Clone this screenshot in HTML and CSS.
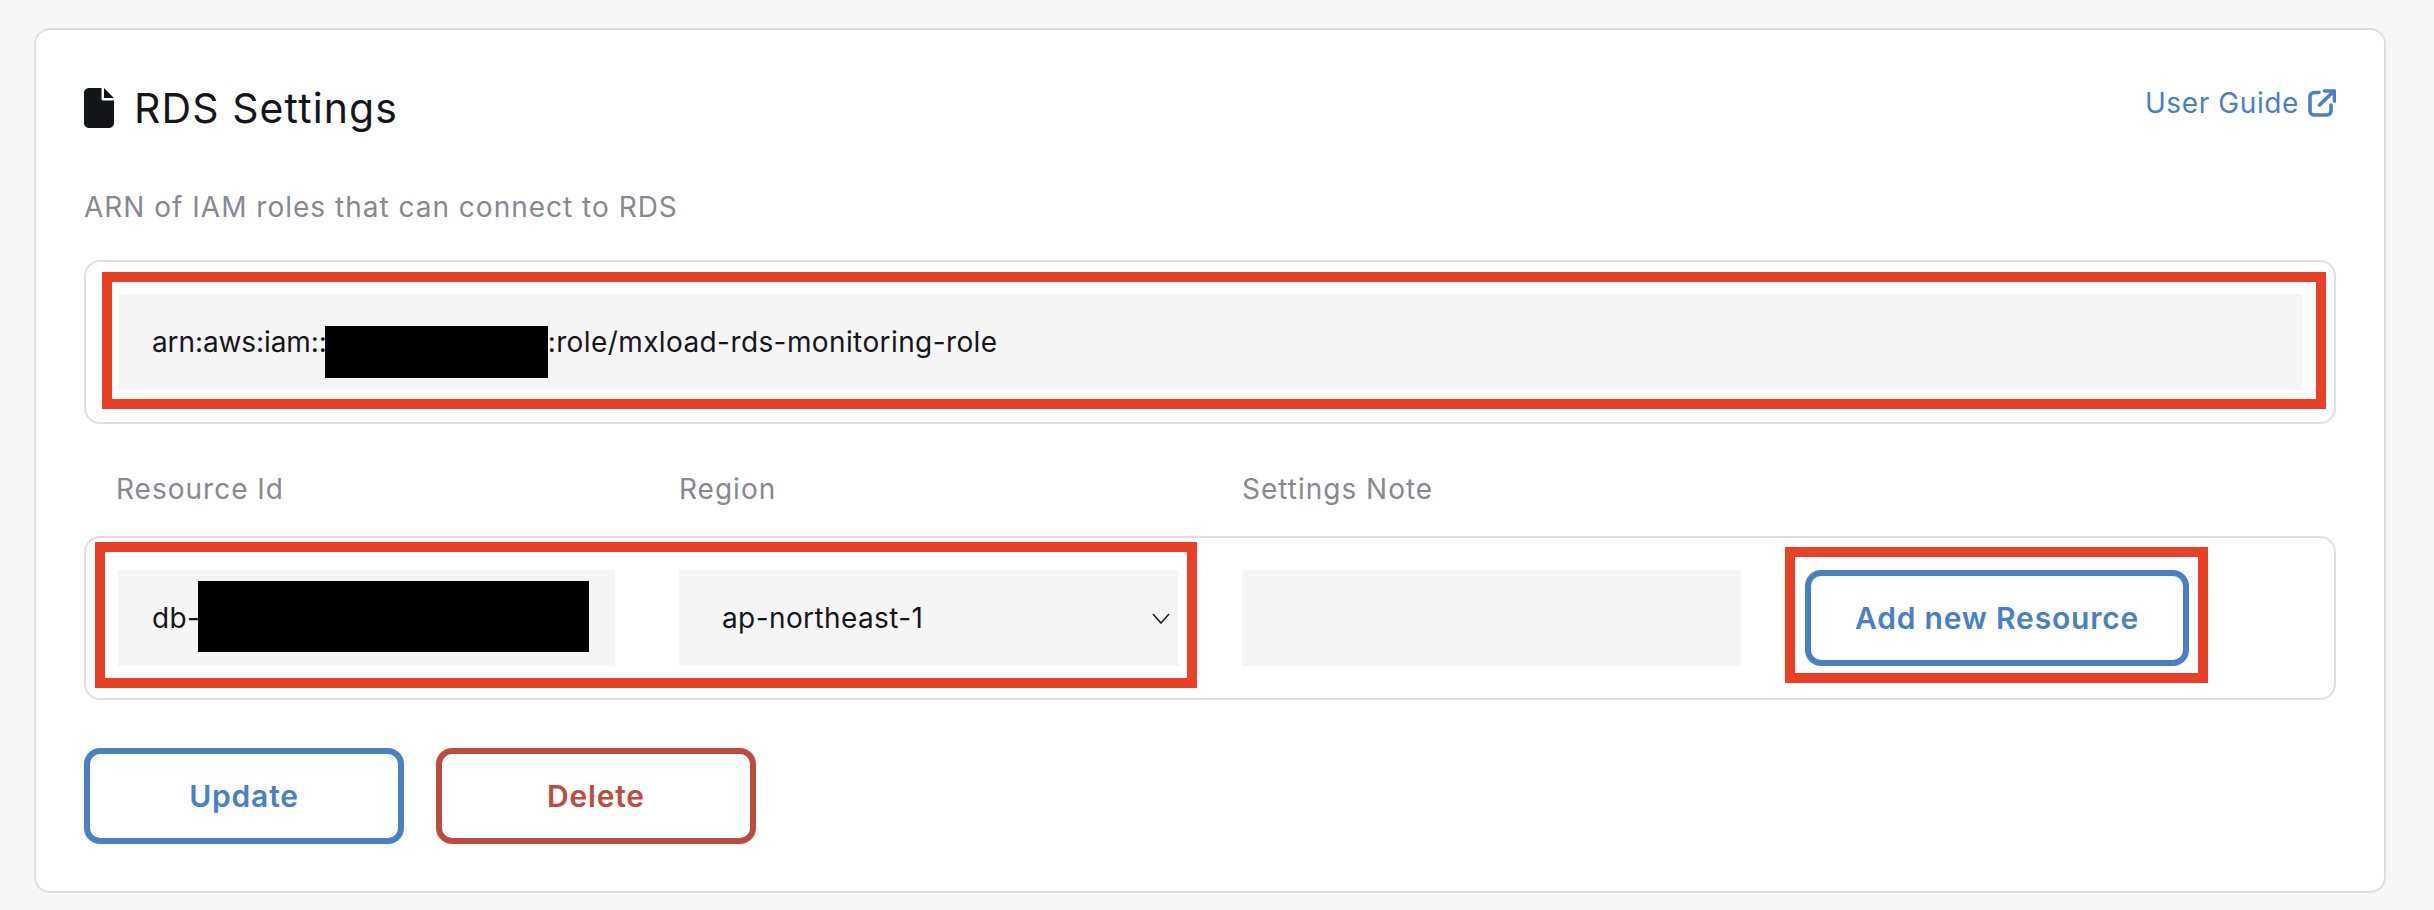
FILE: index.html
```html
<!DOCTYPE html>
<html lang="en">
<head>
<meta charset="utf-8">
<title>RDS Settings</title>
<link rel="stylesheet" href="styles.css">
</head>
<body>
<main class="card">
  <header class="card-head">
    <h1 class="title">
      <svg class="file-icon" viewBox="0 0 384 512" aria-hidden="true"><path d="M224 136V0H64C28.7 0 0 28.700 0 64V448c0 35.300 28.700 64 64 64H320c35.300 0 64-28.700 64-64V160H248c-13.200 0-24-10.800-24-24zM384 128H256V0z"/></svg>
      RDS Settings
    </h1>
    <a class="guide" href="#">User Guide
      <svg class="ext-icon" viewBox="0 0 28 28" aria-hidden="true"><path d="M11 3.500H6a4 4 0 0 0-4 4V22a4 4 0 0 0 4 4h13a4 4 0 0 0 4-4v-6M11.500 16 26 2M16.500 2H26.500V12"/></svg>
    </a>
  </header>

  <p class="label arn-label">ARN of IAM roles that can connect to RDS</p>
  <section class="panel">
    <div class="annotated">
      <div class="field"><span class="tight">arn:aws:iam::</span><span class="redact redact-arn"></span>:role/mxload-rds-monitoring-role</div>
      <span class="mark mark-arn"></span>
    </div>
  </section>

  <div class="grid col-labels">
    <span class="label">Resource Id</span>
    <span class="label">Region</span>
    <span class="label">Settings Note</span>
  </div>
  <section class="panel grid annotated">
    <div class="field">db-<span class="redact redact-db"></span></div>
    <div class="field select">ap-northeast-1
      <svg class="chevron" viewBox="0 0 18 11" aria-hidden="true"><path d="M1 1l8 9 8-9"/></svg>
    </div>
    <div class="field"></div>
    <button class="btn btn-blue" type="button">Add new Resource</button>
    <span class="mark mark-fields"></span>
    <span class="mark mark-add"></span>
  </section>

  <div class="actions">
    <button class="btn btn-blue btn-wide" type="button">Update</button>
    <button class="btn btn-red btn-wide" type="button">Delete</button>
  </div>
</main>
</body>
</html>
```
FILE: styles.css
```css
* { box-sizing: border-box; }

html, body { margin: 0; height: 100%; }

body {
  background: #f7f7f7;
  padding: 28px 0 0 34px;
  font-family: Inter, "Noto Sans CJK JP", sans-serif;
  overflow: hidden;
}

.card {
  width: 2352px;
  height: 865px;
  padding: 48px;
  background: #fff;
  border: 2px solid #dedede;
  border-radius: 16px;
}

.card-head {
  display: flex;
  justify-content: space-between;
  align-items: flex-start;
  height: 60px;
  margin-bottom: 48px;
}

.title {
  display: flex;
  align-items: center;
  gap: 20px;
  height: 60px;
  margin: 0;
  font-size: 41px;
  font-weight: 400;
  letter-spacing: 1.100px;
  color: #14161a;
}

.file-icon { width: 30px; height: 40px; fill: #14161a; }

.guide {
  display: flex;
  align-items: center;
  gap: 9px;
  height: 50px;
  font-size: 28px;
  letter-spacing: 0.600px;
  color: #4780c6;
  text-decoration: none;
}

.ext-icon {
  width: 28px;
  height: 28px;
  fill: none;
  stroke: #4780c6;
  stroke-width: 3.600;
  stroke-linecap: round;
  stroke-linejoin: round;
}

.label {
  font-size: 28px;
  line-height: 42px;
  letter-spacing: 1px;
  color: #868892;
}

.arn-label { margin: 0 0 32px; }

.panel {
  padding: 32px;
  border: 2px solid #dedede;
  border-radius: 16px;
}

.annotated { position: relative; }

.field {
  display: flex;
  align-items: center;
  height: 96px;
  padding: 0 34px;
  background: #f5f5f5;
  font-size: 28px;
  letter-spacing: 0.400px;
  color: #14161a;
  white-space: nowrap;
}

.tight { letter-spacing: -0.100px; }

.redact { display: block; flex: none; background: #000; }
.redact-arn { width: 223px; height: 52px; margin: 20px 0 0 -2px; }
.redact-db { width: 391px; height: 71px; margin: -3px 0 0 -2px; }

.grid {
  display: grid;
  grid-template-columns: 497px 499px 499px 384px;
  column-gap: 64px;
}

.col-labels {
  grid-template-columns: 499px 499px 499px;
  margin: 44px 0 26px;
  padding: 0 32px;
}

.select {
  justify-content: space-between;
  padding: 0 8px 0 43px;
}

.chevron {
  width: 18px;
  height: 11px;
  fill: none;
  stroke: #14161a;
  stroke-width: 1.500;
}

.btn {
  height: 96px;
  padding: 0;
  background: #fff;
  border: 6px solid;
  border-radius: 16px;
  font: 600 30px Inter, sans-serif;
  letter-spacing: 0.800px;
}

.btn-blue { color: #4780c6; border-color: #4780c6; }
.btn-red { color: #bf4a3e; border-color: #bf4a3e; }
.btn-wide { width: 320px; }

.actions {
  display: flex;
  gap: 32px;
  margin-top: 48px;
}

/* Red annotation frames drawn on top of the form */
.mark {
  position: absolute;
  border: 10px solid #ea4026;
  pointer-events: none;
}

.mark-arn { left: -16px; top: -22px; width: 2224px; height: 137px; }
.mark-fields { left: 9px; top: 4px; width: 1102px; height: 146px; }
.mark-add { left: 1699px; top: 9px; width: 423px; height: 136px; }
```
